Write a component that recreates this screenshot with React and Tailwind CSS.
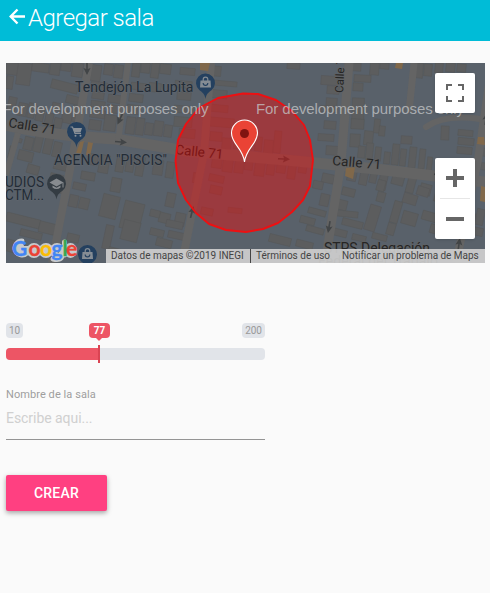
import React from "react";

// Building footprints: x, y, width, height, rotation in degrees
const buildings = [
  [0, 0, 14, 12, 8], [11, 0, 14, 22, 8], [0, 13, 7, 13, 8], [26, 0, 17, 9, 8], [44, 0, 10, 12, 8], [55, 0, 10, 8, 8], [66, 0, 11, 14, 8],
  [45, 19, 27, 9, 14], [60, 33, 14, 8, 14], [46, 40, 10, 8, 12], [66, 43, 10, 16, 10], [56, 48, 10, 12, 12],
  [2, 34, 8, 14, 12], [12, 40, 9, 13, 12], [22, 40, 7, 15, 12], [30, 44, 8, 14, 12], [39, 50, 8, 13, 12], [48, 55, 8, 10, 12],
  [85, 2, 10, 16, 8], [85, 19, 16, 8, 8], [86, 29, 12, 7, 8], [85, 38, 14, 7, 8], [84, 47, 15, 8, 8], [83, 57, 12, 10, 8],
  [98, 1, 9, 11, 8], [108, 2, 9, 13, 8], [104, 22, 13, 7, 8], [102, 32, 14, 8, 8], [101, 42, 12, 8, 8], [98, 52, 12, 16, 8],
  [126, 0, 8, 14, 7], [135, 0, 9, 10, 7], [145, 0, 8, 15, 7], [154, 1, 11, 10, 7], [125, 20, 16, 7, 7], [143, 20, 12, 9, 7],
  [123, 31, 14, 8, 7], [121, 42, 13, 9, 7], [120, 54, 9, 17, 8], [130, 55, 8, 17, 8], [139, 60, 8, 12, 8], [148, 58, 9, 15, 8], [158, 62, 8, 12, 8],
  [174, 5, 15, 7, 5], [169, 18, 17, 7, 5], [171, 29, 14, 8, 5], [168, 43, 22, 7, 5], [168, 54, 18, 10, 5], [173, 66, 16, 9, 5],
  [203, 3, 12, 10, 5], [207, 18, 24, 5, 5], [203, 27, 18, 8, 5], [205, 42, 17, 7, 5], [204, 55, 24, 9, 5], [204, 69, 12, 9, 5],
  [228, 71, 7, 15, 5], [238, 67, 8, 20, 5], [249, 74, 7, 14, 5], [258, 77, 9, 14, 5], [268, 68, 7, 22, 5], [216, 75, 9, 12, 5],
  [281, 0, 13, 6, 4], [315, 13, 17, 9, 4], [321, 23, 12, 8, 4], [320, 35, 11, 11, 4], [314, 43, 17, 6, 4], [318, 58, 12, 8, 4], [312, 71, 16, 7, 4], [320, 83, 12, 9, 4],
  [345, 0, 10, 8, 3], [348, 12, 17, 7, 3], [347, 20, 10, 8, 3], [346, 35, 12, 29, 2], [345, 56, 13, 10, 3], [344, 71, 10, 13, 3],
  [358, 68, 9, 14, 6], [368, 56, 6, 14, 6], [373, 63, 6, 10, 6], [352, 83, 7, 12, 6], [360, 80, 7, 17, 6], [369, 84, 6, 14, 6], [378, 89, 6, 12, 6], [386, 81, 7, 21, 6], [394, 86, 6, 17, 6], [403, 84, 7, 21, 6], [413, 86, 6, 20, 6], [421, 94, 5, 15, 6],
  [435, 63, 8, 14, 2], [395, 73, 11, 8, 4],
  [364, 0, 9, 12, 5], [374, 0, 9, 6, 5], [409, 0, 8, 15, 5], [418, 1, 8, 12, 5], [429, 0, 8, 10, 5], [440, 0, 9, 9, 5], [451, 1, 9, 8, 5],
  [452, 67, 15, 6, 5], [452, 75, 16, 7, 5], [451, 84, 15, 7, 5], [473, 85, 7, 8, 6], [475, 100, 8, 7, 6],
  [8, 75, 8, 4, 18], [18, 74, 9, 13, 14], [28, 73, 8, 16, 13], [38, 74, 8, 17, 13], [47, 79, 8, 15, 13], [12, 88, 15, 10, 14], [48, 98, 13, 9, 14], [44, 111, 13, 8, 14],
  [3, 83, 4, 12, 14], [21, 102, 12, 9, 16], [54, 122, 7, 9, 14],
  [82, 91, 10, 11, 10], [93, 92, 10, 18, 10], [75, 109, 14, 8, 10], [67, 120, 13, 7, 12],
  [110, 94, 8, 15, 10], [120, 94, 8, 15, 10], [130, 94, 8, 19, 10], [105, 115, 10, 14, 10],
  [147, 97, 10, 15, 8], [160, 99, 8, 16, 8],
  [63, 132, 9, 12, 12], [73, 135, 10, 11, 14], [95, 132, 17, 23, 14], [116, 139, 20, 28, 14],
  [153, 150, 11, 10, 14], [160, 130, 9, 14, 12], [144, 147, 10, 7, 14], [169, 150, 10, 13, 12],
  [0, 153, 34, 9, 14], [33, 160, 20, 11, 14], [14, 168, 22, 7, 14], [0, 178, 18, 12, 15],
  [61, 171, 12, 8, 13], [98, 162, 8, 24, 12], [116, 158, 17, 20, 14], [144, 166, 14, 7, 14], [150, 176, 16, 8, 14], [102, 185, 13, 11, 14],
  [206, 92, 10, 13, 8], [217, 92, 10, 17, 8], [229, 91, 9, 19, 8], [239, 93, 8, 14, 8], [249, 92, 10, 21, 8], [261, 94, 8, 18, 8], [271, 94, 9, 16, 8], [282, 96, 8, 20, 8], [293, 95, 8, 15, 8],
  [187, 110, 8, 10, 8], [203, 112, 15, 7, 12], [204, 123, 12, 8, 12], [222, 145, 14, 5, 6], [195, 145, 12, 7, 12], [162, 169, 18, 7, 12], [160, 158, 17, 7, 12],
  [316, 111, 12, 9, 12], [307, 118, 10, 8, 12], [314, 131, 9, 12, 12], [302, 146, 18, 6, 15], [294, 154, 15, 7, 15], [300, 164, 18, 6, 15], [263, 173, 22, 8, 14], [290, 178, 17, 7, 14],
  [342, 102, 9, 16, 12], [354, 104, 8, 18, 12], [364, 106, 7, 14, 12], [373, 109, 8, 18, 12], [386, 111, 12, 11, 15], [401, 113, 8, 17, 15], [414, 121, 11, 11, 15], [429, 125, 8, 14, 15],
  [336, 125, 13, 8, 14], [331, 137, 10, 10, 14], [331, 148, 21, 6, 6], [336, 157, 21, 7, 14], [324, 166, 17, 7, 14], [361, 142, 11, 26, 17],
  [371, 117, 8, 11, 15], [371, 129, 8, 10, 15],
  [397, 131, 14, 10, 17], [411, 124, 12, 9, 17], [386, 138, 8, 22, 16], [396, 149, 15, 13, 16], [381, 160, 8, 12, 16], [416, 149, 15, 9, 16], [424, 162, 12, 9, 16],
  [346, 172, 14, 6, 14], [366, 171, 15, 6, 14], [460, 150, 9, 9, 12], [470, 146, 8, 16, 12], [461, 164, 16, 8, 12],
];

const orange = ["194,0 204,0 202,8 194,7", "74,79 78,78 75,91 70,90", "82,79 87,80 84,93 80,92", "390,0 397,0 396,6 389,5", "340,105 349,104 347,116 339,113", "478,74 472,74 471,81 479,82", "475,123 479,124 479,139 474,138"];

// One-way street arrows: x, y, heading in degrees
const arrows = [
  [81, 6, 180], [114, 56, 205], [115, 79, 95], [278, 96, 92], [186, 149, 14], [323, 164, 190], [480, 56, 8], [453, 181, 8], [434, 112, 98],
];

// Logo letters: character, x, colour
const logo = [["G", 6, "#4285f4"], ["o", 22.5, "#ea4335"], ["o", 34, "#fbbc05"], ["g", 45.5, "#4285f4"], ["l", 56.5, "#34a853"], ["e", 60, "#ea4335"]];

function PlacePin({ x, y, fill, children }) {
  return (
    <g transform={`translate(${x} ${y})`}>
      <path d="M0 16C-.8 11-3 9.500-6 7.300A9.500 9.500 0 1 1 6 7.300C3 9.500 .8 11 0 16Z" fill={fill} />
      {children}
    </g>
  );
}

function Bag() {
  return (
    <g fill="none" stroke="#858c94" strokeWidth="1.2">
      <path d="M-2.300-2v-1.500a2.300 2.300 0 0 1 4.600 0v1.500" />
      <path d="M-5-2.500H5L5.500 4.500H-5.500Z" fill="#858c94" stroke="none" />
      <path d="M-2.300 0a2.300 2.300 0 0 0 4.600 0" stroke="#24405f" />
    </g>
  );
}

function MapCanvas() {
  return (
    <svg className="block h-[200px] w-[479px]" viewBox="0 0 479 200" fontFamily="Roboto, sans-serif">
      <rect width="479" height="200" fill="#59616a" />
      <g fill="#5c5d5e" stroke="#555657" strokeWidth=".5">
        {buildings.map(([x, y, w, h, r], i) => (
          <rect key={i} x={x} y={y} width={w} height={h} transform={`rotate(${r} ${x + w / 2} ${y + h / 2})`} />
        ))}
      </g>
      <g fill="none" stroke="#646464">
        <path d="M0 62Q40 72 110 76L180 88L290 98L370 106L479 119" strokeWidth="11" />
        <path d="M83 0L71 70L46 200" strokeWidth="8" />
        <path d="M122 0L112 80" strokeWidth="6" />
        <path d="M205 0L198 90L176 200" strokeWidth="8" />
        <path d="M343 0L335 100L319 200" strokeWidth="9" />
        <path d="M408 0L403 49" strokeWidth="7" />
        <path d="M420 64Q438 51 474 56" strokeWidth="6" strokeLinecap="round" />
        <path d="M486 0L472 97L450 200" strokeWidth="8" />
        <path d="M12 70L0 112" strokeWidth="6" />
      </g>
      <g fill="#80684a">
        {orange.map((p) => <polygon key={p} points={p} />)}
      </g>
      <g fill="#424547">
        {arrows.map(([x, y, r], i) => (
          <path key={i} transform={`translate(${x} ${y}) rotate(${r})`} d="M0-6L3.500 1L.8 0V6H-.8V0L-3.500 1Z" />
        ))}
      </g>

      <PlacePin x={70.5} y={68.500} fill="#24405f">
        <path d="M-6-4.500h2l2.500 6.500h6" fill="none" stroke="#8a9097" strokeWidth="1.200" />
        <path d="M-3.500-3.500H5.500L4 1H-2Z" fill="#8a9097" />
        <circle cx="-1" cy="4.300" r="1" fill="#8a9097" /><circle cx="4" cy="4.300" r="1" fill="#8a9097" />
      </PlacePin>
      <PlacePin x={199.5} y={20} fill="#24405f"><Bag /></PlacePin>
      <PlacePin x={81.5} y={191.500} fill="#24405f"><Bag /></PlacePin>
      <PlacePin x={50.5} y={120.500} fill="#343c43">
        <path d="M-7-1L0-5L7-1L0 3ZM-4 2V4Q0 7 4 4V2L0 4.300Z" fill="#878b8f" />
        <path d="M6.500-1V4" stroke="#878b8f" />
      </PlacePin>

      <g fill="#232c36" stroke="#626870" strokeWidth="1" paintOrder="stroke" fontSize="14">
        <text x="69" y="29" textLength="118.500" lengthAdjust="spacingAndGlyphs">Tendejón La Lupita</text>
        <text x="48" y="102" textLength="113" lengthAdjust="spacingAndGlyphs">AGENCIA "PISCIS"</text>
        <text x="-1" y="123.500" textLength="39" lengthAdjust="spacingAndGlyphs">UDIOS</text>
        <text x="-1" y="137" textLength="39" lengthAdjust="spacingAndGlyphs">CTM...</text>
      </g>
      <g fill="#252525" stroke="#636363" strokeWidth="1" paintOrder="stroke" fontSize="13.500">
        <text transform="translate(2 64) rotate(9)" textLength="48">Calle 71</text>
        <text transform="translate(169 91) rotate(6)" textLength="48">Calle 71</text>
        <text transform="translate(326 102) rotate(5)" textLength="49">Calle 71</text>
        <text transform="translate(337 30) rotate(-87)" fontSize="11.500">Calle 7</text>
        <text x="318" y="190" fontSize="14" textLength="106">STPS Delegación</text>
        <text x="312" y="203" fontSize="14" textLength="120">Federal del Trabajo</text>
      </g>

      <path d="M237 30.500L252 31L270 37L286 48L298 62L304 77L307 97L304 123L297 137L286 149L272 160L257 166L240 169L220 167L203 161L190 150L180 137L172 120L169.500 98L172 77L180 61L193 45L212 35Z" fill="#ff0000" fillOpacity=".4" stroke="#ed1012" strokeWidth="1.900" strokeLinejoin="round" />

      <g fill="#c5c7c9" fillOpacity=".76" fontSize="15" fontFamily="Liberation Sans, Arial, sans-serif">
        <text x="-3.500" y="51" textLength="206">For development purposes only</text>
        <text x="250" y="51" textLength="208">For development purposes only</text>
      </g>

      <path d="M238.500 99C237 85 225.500 81 225.500 70A13 13 0 0 1 251.500 70C251.500 81 240 85 238.500 99Z" fill="#ea4335" stroke="#fff" strokeWidth="1.100" />
      <circle cx="238.500" cy="70.500" r="4.500" fill="#811411" />

      {/* Light halo behind the logo */}
      <path d="M15 185.500H22M16 178a7 7 0 1 0 5 12M23 187.500a5 5 0 1 0 10 0a5 5 0 1 0-10 0M35 187.500a5 5 0 1 0 10 0a5 5 0 1 0-10 0M46 187.500a5 5 0 1 0 10 0a5 5 0 1 0-10 0M56 184V193Q55 198 47 196M58.500 179V192M60.500 187.500a4 5 0 1 0 8 0a4 5 0 1 0-8 0" fill="#c7cacc" stroke="#c7cacc" strokeWidth="5" strokeLinejoin="round" strokeLinecap="round" />
      <g fontSize="21" fontFamily="Lato, sans-serif" fontWeight="700">
        {logo.map(([c, x, fill]) => <text key={x} x={x} y="193" fill={fill} stroke={fill} strokeWidth=".3">{c}</text>)}
      </g>
    </svg>
  );
}

function MapControls() {
  return (
    <div className="absolute top-[10px] right-[10px] flex flex-col gap-[45px] text-[#666]">
      <button className="flex size-10 items-center justify-center rounded-[2px] bg-white shadow-sm">
        <svg className="size-[18px]" viewBox="0 0 18 18" fill="none" stroke="currentColor" strokeWidth="2">
          <path d="M1 6V1H6M12 1H17V6M17 12V17H12M6 17H1V12" />
        </svg>
      </button>
      <div className="flex h-[81px] w-10 flex-col items-center rounded-[2px] bg-white shadow-sm">
        <button className="flex h-10 w-full items-center justify-center">
          <svg className="size-[18px]" viewBox="0 0 18 18" fill="currentColor"><path d="M7 0h4v7h7v4h-7v7H7v-7H0V7h7z" /></svg>
        </button>
        <div className="h-px w-[30px] bg-[#e6e6e6]" />
        <button className="flex h-10 w-full items-center justify-center">
          <svg className="size-[18px]" viewBox="0 0 18 18" fill="currentColor"><path d="M0 7h18v4H0z" /></svg>
        </button>
      </div>
    </div>
  );
}

export default function App() {
  return (
    <div className="h-[593px] w-[490px] overflow-hidden bg-[#fafafa] font-[Roboto,sans-serif]">
      <header className="flex h-[41px] items-start bg-[#00bcd7] pl-[9px] text-white">
        <svg className="mt-[8px] h-[17px] w-[16px]" viewBox="0 0 16 17" fill="none" stroke="currentColor" strokeWidth="2.400">
          <path d="M16 8.500H2M8.500 1.500L1.700 8.500L8.500 15.500" />
        </svg>
        <h1 className="ml-[3px] mt-[4px] text-[24px] leading-[28px] font-light tracking-[-0.52px] whitespace-nowrap">Agregar sala</h1>
      </header>

      <section className="relative mt-[22px] ml-[6px] h-[200px] w-[479px] overflow-hidden">
        <MapCanvas />
        <div className="absolute right-0 bottom-0 flex h-[14px] w-[379px] items-center bg-[#d2d2d2]/90 text-[10px] leading-[14px] whitespace-nowrap text-[#444]">
          <span className="w-[144px] pl-[5px]">Datos de mapas ©2019 INEGI</span>
          <span className="h-full w-[86px] border-l border-[#444] pl-[5px]">Términos de uso</span>
          <span className="pl-[6px] tracking-[-0.03px]">Notificar un problema de Maps</span>
        </div>
        <MapControls />
      </section>

      <main className="ml-[6px] flex w-[259px] flex-col items-start pt-[60px]">
        <div className="relative flex h-[15px] w-full justify-between text-[10px] leading-[15px] text-[#999]">
          <span className="rounded-[4px] bg-[#e1e4e9] px-[3px]">10</span>
          <span className="rounded-[4px] bg-[#e1e4e9] px-[3px]">200</span>
          <span className="absolute left-[83px] w-[21px] rounded-[4px] bg-[#ed5565] text-center font-bold text-white">77</span>
          <span className="absolute top-[15px] left-[90px] border-x-[3px] border-t-[3px] border-x-transparent border-t-[#ed5565]" />
        </div>
        <div className="relative mt-[10px] flex h-3 w-full rounded-[4px] bg-[#e1e4e9]">
          <div className="h-full w-[93px] rounded-l-[4px] bg-[#ed5565]" />
          <div className="absolute -top-[3px] left-[92px] h-[18px] w-[2px] bg-[#da4453]" />
        </div>
        <label className="mt-[28px] text-[11px] leading-[14px] tracking-[0.07px] text-[#9e9e9e]">Nombre de la sala</label>
        <div className="mt-[5px] h-[33px] w-full border-b border-[#949494] pt-[3px] text-[14px] leading-[16px] tracking-[-0.05px] text-[#d0d0d0]">Escribe aqui...</div>
        <button className="mt-[35px] h-9 w-[101px] rounded-[2px] bg-[#ff4081] text-[14px] leading-[34px] font-medium tracking-[0.2px] text-white shadow-[0_2px_5px_rgba(0,0,0,0.35)]">CREAR</button>
      </main>
    </div>
  );
}
